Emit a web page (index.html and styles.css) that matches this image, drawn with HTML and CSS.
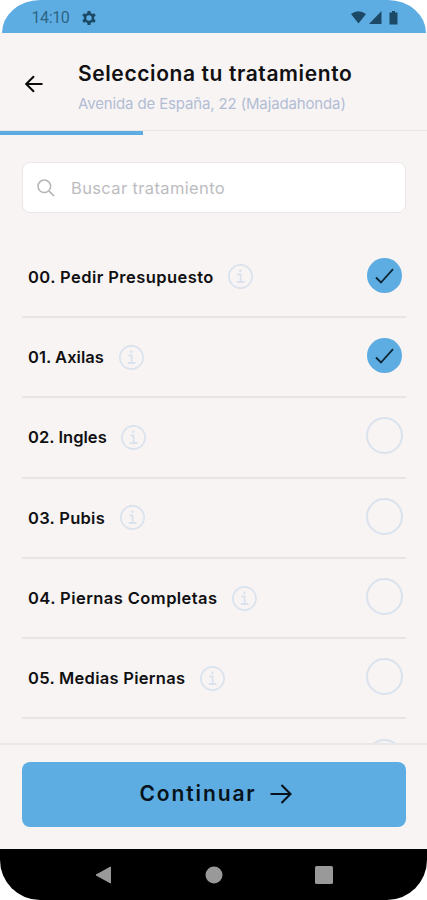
FILE: index.html
```html
<!DOCTYPE html>
<html lang="es">
<head>
<meta charset="utf-8">
<title>Selecciona tu tratamiento</title>
<link rel="stylesheet" href="styles.css">
</head>
<body>
<svg class="defs" aria-hidden="true">
  <symbol id="info" viewBox="0 0 25 25"><circle cx="12.5" cy="12.5" r="11.6" fill="none" stroke="#dae2ee" stroke-width="1.7"/><path d="M9.3 10.5h3.4v7M8.8 18h7.6" fill="none" stroke="#dae2ee" stroke-width="1.8"/><circle cx="12.4" cy="6.8" r="1.3" fill="#dae2ee"/></symbol>
  <symbol id="check" viewBox="0 0 35 35"><circle cx="17.5" cy="17.5" r="17.5" fill="#5dade3"/><path d="M9 19.500l5 5L26 11.200" fill="none" stroke="#0d2433" stroke-width="1.8"/></symbol>
</svg>
<div class="screen">
  <div class="status">
    <span class="time">14:10</span>
    <svg class="gear" viewBox="0 0 14 14"><path d="M5.600 0h2.800l.4 2 1.500.9 2-.7 1.400 2.400-1.600 1.400v2l1.600 1.400-1.400 2.400-2-.7-1.500.9-.4 2H5.600l-.4-2-1.500-.9-2 .7L.3 9.400 1.900 8V6L.3 4.600l1.400-2.400 2 .7L5.200 2z" fill="#1c4a66"/><circle cx="7" cy="7" r="2.700" fill="#5dade3"/></svg>
    <svg class="signals" viewBox="0 0 48 14"><path d="M0 3Q7.500-2.500 15 3L7.500 12.500zM30.500 0v13H18zM38.500 1.500h2.500V0h3v1.500H46.500V13.500h-8V1.500z" fill="#1c4a66"/></svg>
  </div>
  <header class="header">
    <svg class="back" viewBox="0 0 18 18"><path d="M17.500 9H1M9 1.200L1.200 9 9 16.800" fill="none" stroke="#0b0b0c" stroke-width="2"/></svg>
    <div class="heading">
      <h1>Selecciona tu tratamiento</h1>
      <p>Avenida de España, 22 (Majadahonda)</p>
    </div>
  </header>
  <div class="progress"><div class="progress-fill"></div></div>
  <main class="content">
    <div class="search">
      <svg class="lens" viewBox="0 0 18 18"><circle cx="7.300" cy="7.300" r="6.300" fill="none" stroke="#b4b4b6" stroke-width="1.500"/><path d="M12 12l5 5" stroke="#b4b4b6" stroke-width="1.700"/></svg>
      <span>Buscar tratamiento</span>
    </div>
    <ul class="list">
      <li class="row"><span class="label wide">00. Pedir Presupuesto</span><svg class="info"><use href="#info"/></svg><svg class="checked"><use href="#check"/></svg></li>
      <li class="row"><span class="label tight">01. Axilas</span><svg class="info"><use href="#info"/></svg><svg class="checked"><use href="#check"/></svg></li>
      <li class="row"><span class="label tight">02. Ingles</span><svg class="info"><use href="#info"/></svg><span class="radio"></span></li>
      <li class="row"><span class="label medium">03. Pubis</span><svg class="info"><use href="#info"/></svg><span class="radio"></span></li>
      <li class="row"><span class="label wide">04. Piernas Completas</span><svg class="info"><use href="#info"/></svg><span class="radio"></span></li>
      <li class="row"><span class="label medium">05. Medias Piernas</span><svg class="info"><use href="#info"/></svg><span class="radio"></span></li>
      <li class="row"><span class="radio"></span></li>
    </ul>
  </main>
  <footer class="footer">
    <button class="continue"><span>Continuar</span><svg class="next" viewBox="0 0 22 20"><path d="M.5 10H21M11.500 1l9 9-9 9" fill="none" stroke="#07131b" stroke-width="2.100"/></svg></button>
  </footer>
  <nav class="nav">
    <svg viewBox="0 0 18 18"><path d="M16.500 1v16L2 9z" fill="#999" stroke="#999" stroke-linejoin="round"/></svg>
    <svg viewBox="0 0 18 18"><circle cx="9" cy="9" r="8.500" fill="#999"/></svg>
    <svg viewBox="0 0 18 18"><rect width="18" height="18" rx="1.500" fill="#999"/></svg>
  </nav>
</div>
</body>
</html>
```
FILE: styles.css
```css
* { box-sizing: border-box; margin: 0; padding: 0; }
body { background: #fff; font-family: Inter, "Liberation Sans", sans-serif; color: #101012; }
.defs { position: absolute; width: 0; height: 0; }
.screen { width: 427px; height: 900px; display: flex; flex-direction: column; overflow: hidden; }
.status { height: 33px; margin: 0 1px 0 2px; padding: 2px 27.5px 0 29.5px; display: flex; align-items: center; background: #5dade3; border-radius: 38px 38px 0 0 / 33px 33px 0 0; flex: none; }
.time { font: 16px Roboto, sans-serif; color: #2d6485; letter-spacing: -0.4px; }
.gear { width: 14px; height: 14px; margin-left: 12.5px; }
.signals { width: 48px; height: 14px; margin-left: auto; }
.header { height: 97px; flex: none; background: #f7f4f3; display: flex; align-items: flex-start; padding: 28px 25px 0; }
.back { width: 18px; height: 18px; margin-top: 14px; }
.heading { margin-left: 35px; white-space: nowrap; }
h1 { font-size: 21px; line-height: 26px; font-weight: 600; letter-spacing: 0.6px; }
.heading p { font-size: 15px; line-height: 20px; margin-top: 7px; color: #b2bdd5; letter-spacing: -0.14px; }
.progress { height: 5px; flex: none; background: #f7f4f3; border-top: 1px solid #e9e6e5; }
.progress-fill { width: 143px; height: 4px; background: #5dade3; }
.content { flex: 1; min-height: 0; overflow: hidden; background: #f7f4f3; padding: 27px 21px 0 22px; }
.search { height: 51px; border: 1px solid #e9e7e8; border-radius: 8px; background: #fff; display: flex; align-items: center; padding-left: 14px; gap: 16px; color: #bcbcbf; font-size: 16.5px; letter-spacing: 0.36px; }
.lens { width: 18px; height: 18px; }
.list { list-style: none; margin-top: 24.7px; }
.row { height: 80.3px; border-bottom: 2px solid #e8e5e5; padding: 0 4px 0 6px; display: flex; align-items: center; }
.label { font-size: 16.5px; font-weight: 600; white-space: nowrap; }
.wide { letter-spacing: 0.43px; }
.medium { letter-spacing: 0.28px; }
.tight { letter-spacing: 0.04px; }
.info { width: 25px; height: 25px; margin-left: 14.6px; }
.checked { width: 35px; height: 35px; margin-left: auto; margin-bottom: 3px; }
.radio { width: 37px; height: 37px; border: 2px solid #dae2ee; border-radius: 50%; margin: 0 -1px 3px auto; }
.footer { height: 106px; flex: none; background: #f7f4f3; border-top: 2px solid #eae7e6; padding: 17px 21px 0 22px; }
.continue { width: 100%; height: 65px; border: 0; border-radius: 8px; background: #5dade3; display: flex; align-items: center; justify-content: center; gap: 13px; color: #07131b; font: 600 21px Inter, sans-serif; letter-spacing: 1.9px; padding: 0 0 2px 3px; }
.next { width: 22px; height: 20px; margin-top: 1px; }
.nav { height: 51px; flex: none; background: #000; border-radius: 0 0 40px 40px; padding: 0 94px; display: flex; align-items: center; justify-content: space-between; }
.nav svg { height: 18px; width: 18px; }
```
